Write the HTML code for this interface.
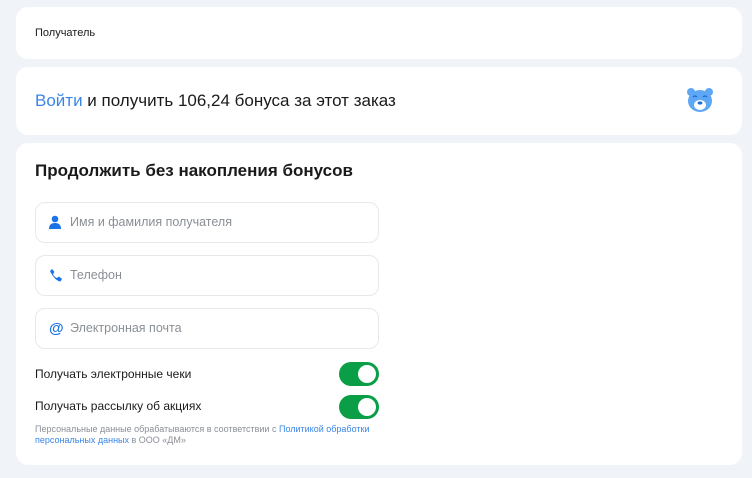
<!DOCTYPE html><html><head><meta charset="utf-8"><style>
body{margin:0;width:752px;height:478px;background:#f0f3f7;font-family:"Liberation Sans",sans-serif;position:relative;overflow:hidden;color:#1a1a1a}
.c{position:absolute;left:16px;width:726px;background:#fff;border-radius:12px}
.inp{position:absolute;left:35px;width:342px;height:39px;border:1px solid #e6e8ec;border-radius:10px}
.inp span{position:absolute;left:34px;top:12px;font-size:12.5px;color:#8a8f96}
.inp svg{position:absolute;left:13px;top:12px}
.t{position:absolute;left:339px;width:40px;height:24px;border-radius:12px;background:#0a9e46}
.t:after{content:"";position:absolute;right:3px;top:3px;width:18px;height:18px;border-radius:50%;background:#fff}
.l{position:absolute;left:35px;font-size:12px}
</style></head><body>
<div class="c" style="top:7px;height:52px"><div style="position:absolute;left:19px;top:20px;font-size:11px">Получатель</div></div>
<div class="c" style="top:67px;height:68px"><div style="position:absolute;left:19px;top:24px;font-size:17px"><span style="color:#3a86e8">Войти</span> и получить 106,24 бонуса за этот заказ</div>
<svg style="position:absolute;left:670px;top:20px" width="28" height="26" viewBox="0 0 28 26"><circle cx="5" cy="5" r="4" fill="#5ea7f5"/><circle cx="23" cy="5" r="4" fill="#5ea7f5"/><ellipse cx="14" cy="14" rx="12" ry="11" fill="#5ea7f5"/><ellipse cx="14" cy="18" rx="6" ry="5" fill="#fff"/><ellipse cx="14" cy="16" rx="2.5" ry="1.6" fill="#1f6fd6"/><path d="M7 10q2-2 4 0M17 10q2-2 4 0" stroke="#1f6fd6" stroke-width="1.5" fill="none"/></svg></div>
<div class="c" style="top:143px;height:322px"></div>
<div style="position:absolute;left:35px;top:161px;font-size:17px;font-weight:bold">Продолжить без накопления бонусов</div>
<div class="inp" style="top:202px"><svg width="12" height="14" viewBox="0 0 12 14"><circle cx="6" cy="4" r="3.3" fill="#1a73e8"/><path d="M0 14q0-6 6-6t6 6z" fill="#1a73e8"/></svg><span>Имя и фамилия получателя</span></div>
<div class="inp" style="top:255px"><svg width="14" height="14" viewBox="0 0 14 14"><path d="M3 1l2.5 3-1.5 2q1 3 4 4l2-1.5 3 2.5-1.5 2.5Q6 13 1 3z" fill="#1a73e8"/></svg><span>Телефон</span></div>
<div class="inp" style="top:308px"><svg width="14" height="14" viewBox="0 0 14 14"><text x="0" y="12" font-size="15" font-weight="bold" fill="#1a73e8" font-family="Liberation Sans">@</text></svg><span>Электронная почта</span></div>
<div class="l" style="top:367px">Получать электронные чеки</div><div class="t" style="top:362px"></div>
<div class="l" style="top:399px">Получать рассылку об акциях</div><div class="t" style="top:395px"></div>
<div style="position:absolute;left:35px;top:424px;width:345px;font-size:9px;line-height:11px;color:#8a8f96">Персональные данные обрабатываются в соответствии с <span style="color:#3a86e8">Политикой обработки персональных данных</span> в ООО «ДМ»</div>
</body></html>
